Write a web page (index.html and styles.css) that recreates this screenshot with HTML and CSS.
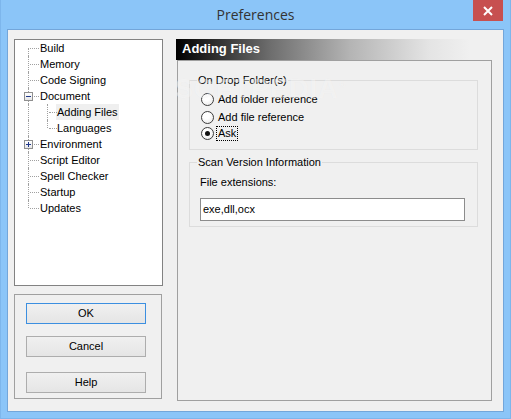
FILE: index.html
```html
<!DOCTYPE html>
<html>
<head>
<meta charset="utf-8">
<link rel="stylesheet" href="styles.css">
</head>
<body>
<div class="window">
  <div class="titlebar">
    <div></div>
    <div class="title">Preferences</div>
    <div class="close">
      <svg width="10" height="10" viewBox="0 0 10 10"><path d="M1 1L9 9M9 1L1 9" stroke="#fff" stroke-width="2"/></svg>
    </div>
  </div>
  <div class="client">
    <div class="leftcol">
      <div class="tree">
        <div class="row"><span class="vl l1 down"></span><span class="hl h1"></span><span class="lbl top">Build</span></div>
        <div class="row"><span class="vl l1 full"></span><span class="hl h1"></span><span class="lbl top">Memory</span></div>
        <div class="row"><span class="vl l1 full"></span><span class="hl h1"></span><span class="lbl top">Code Signing</span></div>
        <div class="row"><span class="vl l1 full"></span><span class="hl h1"></span><span class="box minus"></span><span class="lbl top">Document</span></div>
        <div class="row"><span class="vl l1 full"></span><span class="vl l2 full"></span><span class="hl h2"></span><span class="lbl child sel">Adding Files</span></div>
        <div class="row"><span class="vl l1 full"></span><span class="vl l2 up"></span><span class="hl h2"></span><span class="lbl child">Languages</span></div>
        <div class="row"><span class="vl l1 full"></span><span class="hl h1"></span><span class="box plus"></span><span class="lbl top">Environment</span></div>
        <div class="row"><span class="vl l1 full"></span><span class="hl h1"></span><span class="lbl top">Script Editor</span></div>
        <div class="row"><span class="vl l1 full"></span><span class="hl h1"></span><span class="lbl top">Spell Checker</span></div>
        <div class="row"><span class="vl l1 full"></span><span class="hl h1"></span><span class="lbl top">Startup</span></div>
        <div class="row"><span class="vl l1 up"></span><span class="hl h1"></span><span class="lbl top">Updates</span></div>
      </div>
      <div class="btnpanel">
        <div class="btn focus b-ok">OK</div>
        <div class="btn b-cancel">Cancel</div>
        <div class="btn b-help">Help</div>
      </div>
    </div>
    <div class="rightcol">
      <div class="header">Adding Files</div>
      <div class="panel">
        <fieldset class="group g1">
          <legend>On Drop Folder(s)</legend>
          <div class="radio r1"><span class="circle"></span><span class="rtext">Add folder reference</span></div>
          <div class="radio r2"><span class="circle"></span><span class="rtext">Add file reference</span></div>
          <div class="radio r3"><span class="circle checked"></span><span class="rtext focused">Ask</span></div>
        </fieldset>
        <fieldset class="group g2">
          <legend>Scan Version Information</legend>
          <div class="fl">File extensions:</div>
          <div class="input">exe,dll,ocx</div>
        </fieldset>
        <div class="watermark">SOFTPEDIA<sup>®</sup></div>
      </div>
    </div>
  </div>
</div>
</body>
</html>
```

FILE: styles.css
```css
body {
  margin: 0;
  font-family: "Liberation Sans", Arial, sans-serif;
  font-size: 11px;
  color: #000;
}
.window {
  width: 511px;
  height: 419px;
  box-sizing: border-box;
  background: #8bc5f8;
  border: 1px solid #7db6ec;
  border-top: none;
  display: flex;
  flex-direction: column;
}
.titlebar {
  height: 29px;
  display: grid;
  grid-template-columns: 1fr auto 1fr;
  align-items: start;
}
.title {
  font-family: "Open Sans", "Noto Sans", sans-serif;
  font-size: 14px;
  color: #333;
  line-height: 30px;
}
.close {
  justify-self: end;
  margin-right: 7px;
  width: 30px;
  height: 21px;
  background: #c75050;
  display: flex;
  align-items: center;
  justify-content: center;
}
.close svg { display: block; }
.client {
  margin: 0 6px 6px 6px;
  height: 383px;
  box-sizing: border-box;
  border: 1px solid #73a6da;
  background: #f0f0f0;
  display: flex;
  padding: 9px 0 0 6px;
  gap: 13px;
}
.leftcol {
  width: 149px;
  display: flex;
  flex-direction: column;
  gap: 8px;
}
.tree {
  height: 247px;
  box-sizing: border-box;
  border: 1px solid #828282;
  background: #fff;
}
.row {
  position: relative;
  height: 16px;
  display: flex;
  align-items: center;
}
.vl {
  position: absolute;
  width: 0;
  border-left: 1px dotted #a0a0a0;
}
.l1 { left: 13px; }
.l2 { left: 32px; }
.vl.full { top: 0; bottom: 0; }
.vl.down { top: 8px; bottom: 0; }
.vl.up { top: 0; height: 8px; }
.hl {
  position: absolute;
  top: 8px;
  height: 0;
  border-top: 1px dotted #a0a0a0;
}
.h1 { left: 15px; width: 9px; }
.h2 { left: 34px; width: 8px; }
.box {
  position: absolute;
  left: 9px;
  top: 4px;
  width: 9px;
  height: 9px;
  box-sizing: border-box;
  border: 1px solid #8f8f8f;
  background: linear-gradient(#fff, #e6e6e6);
}
.box::before {
  content: "";
  position: absolute;
  left: 1px;
  top: 3px;
  width: 5px;
  height: 1px;
  background: #20388a;
}
.box.plus::after {
  content: "";
  position: absolute;
  left: 3px;
  top: 1px;
  width: 1px;
  height: 5px;
  background: #20388a;
}
.lbl {
  line-height: 15px;
  padding: 1px 1px 0 1px;
}
.lbl.top { margin-left: 24px; }
.lbl.child { margin-left: 41px; }
.lbl.sel { background: #efefef; }
.btnpanel {
  height: 105px;
  box-sizing: border-box;
  width: 148px;
  border: 1px solid #a0a0a0;
  padding: 8px 0 0 11px;
  display: flex;
  flex-direction: column;
}
.btn {
  width: 120px;
  height: 21px;
  box-sizing: border-box;
  border: 1px solid #adadad;
  background: linear-gradient(#f0f0f0, #e5e5e5);
  text-align: center;
  line-height: 19px;
}
.btn.focus { border-color: #3c8fe0; }
.b-cancel { margin-top: 12px; }
.b-help { margin-top: 15px; }
.rightcol {
  width: 316px;
  display: flex;
  flex-direction: column;
}
.header {
  height: 21px;
  background: linear-gradient(to right, #000 0%, #6e6e6e 30%, #b4b4b4 55%, #e4e4e4 80%, #f0f0f0 93%);
  color: #fff;
  font-weight: bold;
  font-size: 13px;
  line-height: 20px;
  padding-left: 6px;
}
.panel {
  position: relative;
  margin-left: 1px;
  width: 315px;
  height: 341px;
  box-sizing: border-box;
  border: 1px solid #a0a0a0;
  padding: 12px 0 0 11px;
}
.group {
  margin: 0;
  width: 289px;
  box-sizing: border-box;
  border: 1px solid #dcdcdc;
  padding: 0 0 0 7px;
}
.group legend {
  padding: 0 1px;
  line-height: 14px;
}
.g1 { height: 77px; }
.g2 { height: 72px; margin-top: 5px; }
.radio {
  display: flex;
  align-items: center;
  height: 16px;
  margin-left: 4px;
}
.r1 { margin-top: 4px; }
.r2 { margin-top: 2px; }
.r3 { margin-top: 0px; }
.circle {
  width: 13px;
  height: 13px;
  box-sizing: border-box;
  border: 1px solid #3c3c3c;
  border-radius: 50%;
  background: radial-gradient(circle at 40% 35%, #fff 30%, #e4e4e4 100%);
  position: relative;
}
.circle.checked::after {
  content: "";
  position: absolute;
  left: 3px;
  top: 3px;
  width: 5px;
  height: 5px;
  border-radius: 50%;
  background: #111;
}
.rtext {
  margin-left: 2px;
  padding: 0 1px;
  line-height: 13px;
  border: 1px dotted transparent;
}
.rtext.focused { border-color: #000; }
.fl {
  margin: 6px 0 0 3px;
  line-height: 14px;
}
.input {
  margin: 9px 0 0 3px;
  width: 265px;
  height: 23px;
  box-sizing: border-box;
  border: 1px solid #8c8c8c;
  background: #fff;
  line-height: 21px;
  padding-left: 2px;
}
.watermark {
  position: absolute;
  left: -3px;
  top: 13px;
  font-family: "Liberation Sans", Arial, sans-serif;
  font-size: 27px;
  font-weight: bold;
  letter-spacing: 1px;
  color: rgba(255, 255, 255, 0.45);
  text-shadow: 0 0 1px rgba(0, 0, 0, 0.04);
  pointer-events: none;
}
.watermark sup { font-size: 9px; }
```
